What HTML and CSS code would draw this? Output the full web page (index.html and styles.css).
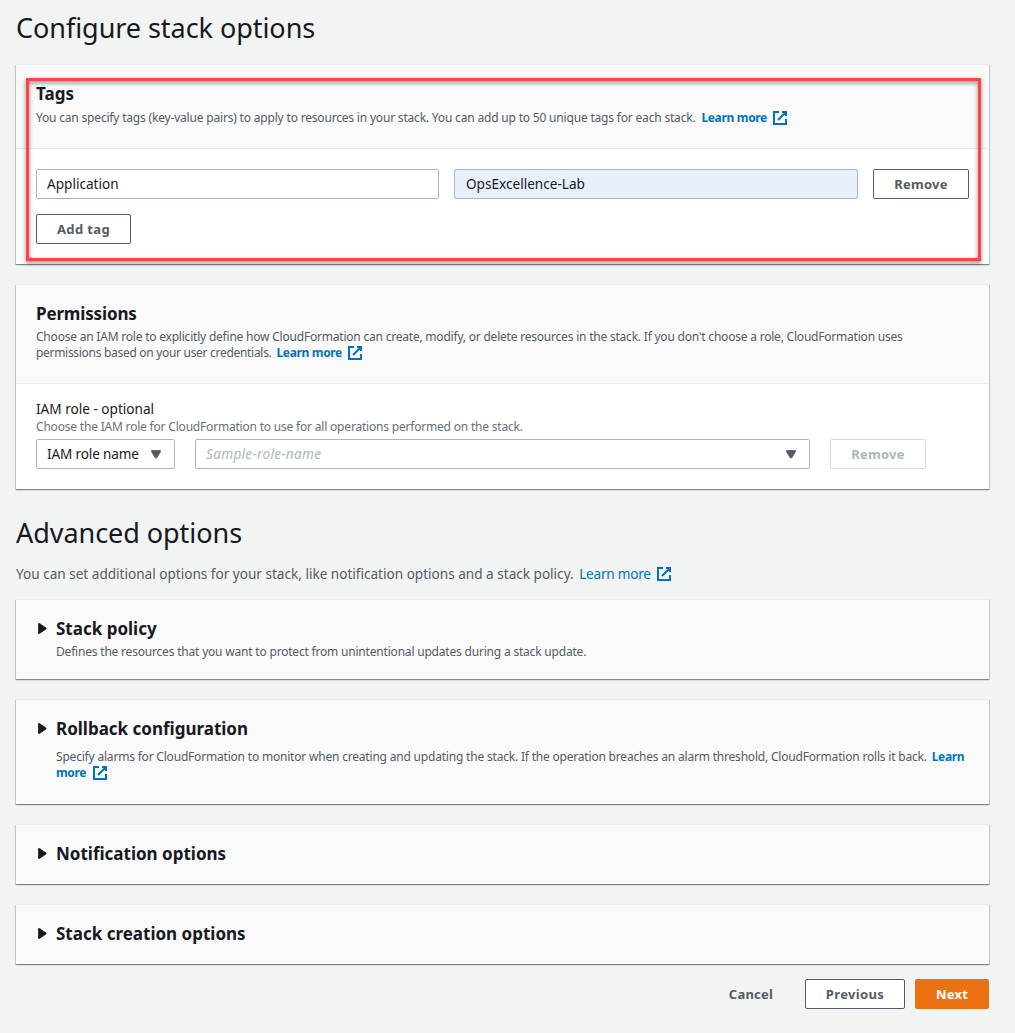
FILE: index.html
```html
<!DOCTYPE html>
<html lang="en">
<head>
<meta charset="utf-8">
<title>Configure stack options</title>
<link rel="stylesheet" href="styles.css">
</head>
<body>
<svg class="defs" width="0" height="0" aria-hidden="true">
  <symbol id="external" viewBox="0 0 16 16">
    <path d="M10 2h4v4M6 10l8-8M14 9.05V14H2V2h5" fill="none" stroke="#0073bb" stroke-width="2"/>
  </symbol>
  <symbol id="caret" viewBox="0 0 10 9">
    <path d="M.5 .5h9v1.2L5.6 8H4.4L.5 1.7z" fill="#545b64" stroke="#545b64" stroke-linejoin="round" stroke-width=".8"/>
  </symbol>
  <symbol id="expand" viewBox="0 0 9 11">
    <path d="M.5 .5h.9L8 5v1L1.4 10.5H.5z" fill="#16191f" stroke="#16191f" stroke-linejoin="round" stroke-width=".8"/>
  </symbol>
</svg>
<main class="page">
  <h1 class="title">Configure stack options</h1>

  <section class="card tags">
    <header class="card-header">
      <h2 class="heading">Tags</h2>
      <p class="hint tags-hint">You can specify tags (key-value pairs) to apply to resources in your stack. You can add up to 50 unique tags for each stack. <a class="link tags-link" href="#">Learn more<svg class="external"><use href="#external"/></svg></a></p>
    </header>
    <div class="card-body tags-body">
      <div class="tag-row">
        <input class="input" type="text" value="Application" aria-label="Key">
        <input class="input input-filled" type="text" value="OpsExcellence-Lab" aria-label="Value">
        <button class="button remove">Remove</button>
      </div>
      <button class="button add">Add tag</button>
    </div>
    <div class="highlight"></div>
  </section>

  <section class="card">
    <header class="card-header">
      <h2 class="heading permissions-heading">Permissions</h2>
      <p class="hint permissions-hint">Choose an IAM role to explicitly define how CloudFormation can create, modify, or delete resources in the stack. If you don't choose a role, CloudFormation uses<br><span class="snug">permissions based on your user credentials.</span> <a class="link" href="#">Learn more<svg class="external"><use href="#external"/></svg></a></p>
    </header>
    <div class="card-body role-body">
      <div class="label">IAM role - optional</div>
      <p class="hint role-hint">Choose the IAM role for CloudFormation to use for all operations performed on the stack.</p>
      <div class="role-row">
        <div class="select role-kind"><span>IAM role name</span><svg class="caret"><use href="#caret"/></svg></div>
        <div class="select role-value"><span class="placeholder">Sample-role-name</span><svg class="caret"><use href="#caret"/></svg></div>
        <button class="button remove" disabled>Remove</button>
      </div>
    </div>
  </section>

  <h1 class="title advanced">Advanced options</h1>
  <p class="intro">You can set additional options for your stack, like notification options and a stack policy. <a class="link link-plain" href="#">Learn more<svg class="external"><use href="#external"/></svg></a></p>

  <section class="card fold">
    <svg class="expand"><use href="#expand"/></svg>
    <div>
      <h2 class="heading">Stack policy</h2>
      <p class="hint">Defines the resources that you want to protect from unintentional updates during a stack update.</p>
    </div>
  </section>

  <section class="card fold rollback">
    <svg class="expand"><use href="#expand"/></svg>
    <div>
      <h2 class="heading">Rollback configuration</h2>
      <p class="hint">Specify alarms for CloudFormation to monitor when creating and updating the stack. If the operation breaches an alarm threshold, CloudFormation rolls it back. <a class="link" href="#">Learn<br>more<svg class="external"><use href="#external"/></svg></a></p>
    </div>
  </section>

  <section class="card fold">
    <svg class="expand"><use href="#expand"/></svg>
    <h2 class="heading">Notification options</h2>
  </section>

  <section class="card fold">
    <svg class="expand"><use href="#expand"/></svg>
    <h2 class="heading">Stack creation options</h2>
  </section>

  <footer class="actions">
    <button class="button cancel">Cancel</button>
    <button class="button previous">Previous</button>
    <button class="button next">Next</button>
  </footer>
</main>
</body>
</html>
```
FILE: styles.css
```css
* {
  box-sizing: border-box;
}

body {
  margin: 0;
  background: #f2f3f3;
  color: #16191f;
  font: 13.6px/20px "Noto Sans", sans-serif;
}

.defs {
  position: absolute;
}

h1,
h2,
p {
  margin: 0;
}

.page {
  width: 1015px;
  height: 1033px;
  padding: 10px 26px 0 16px;
  overflow: hidden;
}

.title {
  margin-bottom: 18px;
  font-size: 27px;
  font-weight: 400;
  line-height: 36px;
  letter-spacing: -0.05px;
}

.advanced {
  margin: 26px 0 13px;
}

.intro {
  margin-bottom: 15px;
  color: #545b64;
  letter-spacing: -0.01px;
  white-space: nowrap;
}

/* Cards */
.card {
  position: relative;
  margin-bottom: 20px;
  border-top: 1px solid #eaeded;
  background: #fff;
  box-shadow: 0 1px 1px 0 rgba(0, 28, 36, 0.3), 1px 1px 1px 0 rgba(0, 28, 36, 0.15), -1px 1px 1px 0 rgba(0, 28, 36, 0.15);
}

.card-header {
  padding: 18px 20px 22px;
  border-bottom: 1px solid #eaeded;
  background: #fafafa;
}

.card-body {
  padding: 20px;
}

.heading {
  font-size: 17px;
  font-weight: 700;
  line-height: 22px;
}

.permissions-heading {
  letter-spacing: -0.15px;
}

.hint {
  margin-top: 4px;
  color: #545b64;
  font-size: 12px;
  line-height: 16px;
  letter-spacing: -0.195px;
  white-space: nowrap;
}

.tags-hint {
  margin-top: 5px;
  letter-spacing: -0.185px;
}

.permissions-hint {
  letter-spacing: -0.21px;
}

.snug {
  letter-spacing: -0.3px;
}

.link {
  margin-left: 2px;
  color: #0073bb;
  font-weight: 700;
  letter-spacing: -0.33px;
  text-decoration: none;
}

.tags-link {
  margin-left: 3px;
}

.link-plain {
  font-weight: 400;
  letter-spacing: -0.23px;
}

.external {
  width: 16px;
  height: 16px;
  margin: -2px 0 -2px 5.5px;
  vertical-align: -2px;
}

.link-plain .external {
  margin-left: 5px;
  vertical-align: -1px;
}

/* Tag editor */
.tags-body {
  display: grid;
  gap: 15px;
  justify-items: start;
}

.tag-row {
  display: grid;
  grid-template-columns: 403px 404px 96px;
  gap: 15px;
}

.input,
.select {
  height: 30px;
  padding: 0 10px;
  border: 1px solid #aab7b8;
  border-radius: 2px;
  background: #fff;
  color: #16191f;
  font: inherit;
}

.input {
  width: 100%;
  padding-bottom: 2px;
}

.input-filled {
  padding-left: 11px;
  background: #e8f0fe;
}

.highlight {
  position: absolute;
  top: 13px;
  left: 10px;
  width: 955px;
  height: 183px;
  border: 3px solid #ff4343;
  filter: drop-shadow(0 2px 2px rgba(0, 0, 0, 0.5));
  pointer-events: none;
}

/* Buttons */
.button {
  height: 30px;
  padding: 0;
  border: 1px solid #545b64;
  border-radius: 2px;
  background: #fff;
  color: #545b64;
  font: 700 13px/20px "Noto Sans", sans-serif;
  letter-spacing: 0.25px;
}

.button:disabled {
  border-color: #d5dbdb;
  color: #aab7b8;
}

.remove {
  width: 96px;
}

.add {
  width: 95px;
  letter-spacing: 0.36px;
}

/* Role picker */
.role-body {
  padding-top: 15px;
}

.role-hint {
  margin: 0 0 4px;
  color: #687078;
}

.role-row {
  display: flex;
  gap: 20px;
}

.select {
  display: flex;
  align-items: center;
  justify-content: space-between;
  padding-right: 13px;
}

.role-kind {
  width: 139px;
  letter-spacing: -0.15px;
}

.role-value {
  width: 615px;
}

.placeholder {
  color: #aab7b8;
  font-style: italic;
  letter-spacing: 0.3px;
}

.caret {
  width: 10px;
  height: 9px;
}

/* Collapsed sections */
.fold {
  display: flex;
  padding: 18px 20px 19px 21px;
  background: #fafafa;
}

.expand {
  flex: none;
  width: 9px;
  height: 11px;
  margin: 5px 9px 0 1px;
}

.rollback {
  padding-bottom: 23px;
}

.rollback .hint {
  margin-top: 9px;
}

/* Footer */
.actions {
  display: flex;
  justify-content: flex-end;
  gap: 10px;
  margin-top: -5px;
}

.cancel {
  width: 88px;
  border-color: transparent;
  background: transparent;
}

.previous {
  width: 100px;
  letter-spacing: 0.36px;
}

.next {
  width: 74px;
  border-color: #ec7211;
  background: #ec7211;
  color: #fff;
}
```
